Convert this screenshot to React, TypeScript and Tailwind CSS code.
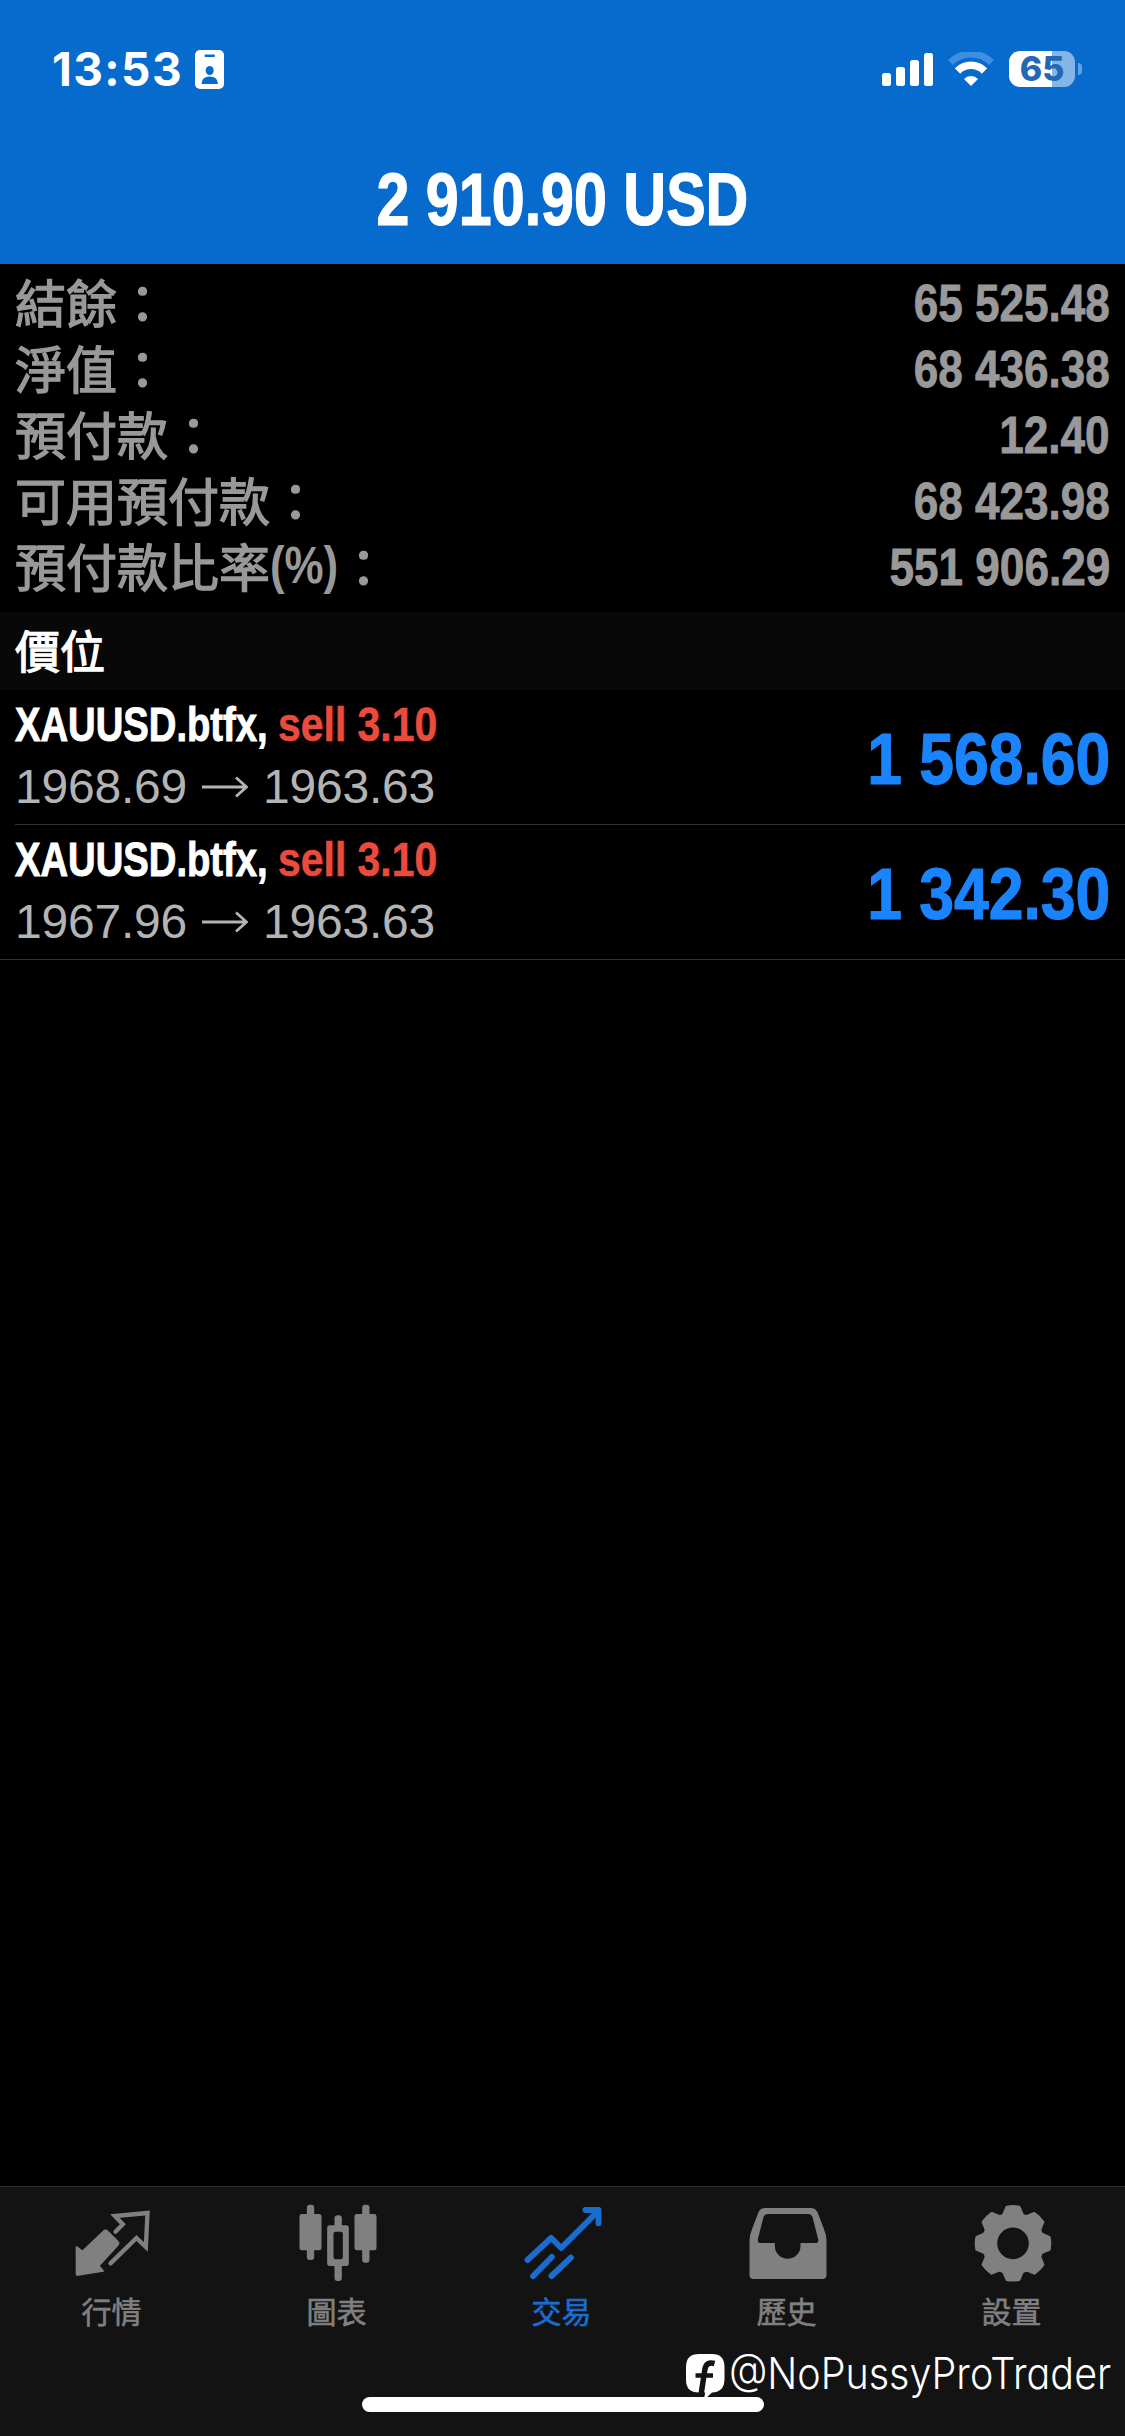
import React from "react";

const CJK = "font-['Noto_Sans_CJK_TC',sans-serif]";
const LATIN = "font-['Liberation_Sans',sans-serif]";

const summary = [
  { label: "結餘", suffix: "", value: "65 525.48" },
  { label: "淨值", suffix: "", value: "68 436.38" },
  { label: "預付款", suffix: "", value: "12.40" },
  { label: "可用預付款", suffix: "", value: "68 423.98" },
  { label: "預付款比率", suffix: "(%)", value: "551 906.29" },
];

const positions = [
  { symbol: "XAUUSD.btfx,", side: "sell 3.10", open: "1968.69", current: "1963.63", profit: "1 568.60" },
  { symbol: "XAUUSD.btfx,", side: "sell 3.10", open: "1967.96", current: "1963.63", profit: "1 342.30" },
];

function gearPath(cx: number, cy: number) {
  const pts: string[] = [];
  const at = (r: number, deg: number) => {
    const a = ((deg - 90) * Math.PI) / 180;
    return `${(cx + r * Math.cos(a)).toFixed(1)} ${(cy + r * Math.sin(a)).toFixed(1)}`;
  };
  for (let i = 0; i < 8; i++) {
    const c = i * 45;
    pts.push(`${i === 0 ? "M" : "L"}${at(91, c - 17.5)}`);
    pts.push(`L${at(110, c - 9.5)}`);
    pts.push(`Q${at(112, c)} ${at(110, c + 9.5)}`);
    pts.push(`L${at(91, c + 17.5)}`);
    pts.push(`Q${at(87, c + 22.5)} ${at(91, c + 27.5)}`);
  }
  return pts.join("") + "Z";
}

function QuotesIcon() {
  return (
    <svg viewBox="217.5 99 240 240" className="h-20 w-20" fill="none" stroke="currentColor">
      <path
        d="M228 231L246 244L309 184Q315 178 321 184L352 215Q357 220 351 226L295 287L308 303L233 315Q228 316 228 311Z"
        fill="currentColor"
        strokeWidth="5"
        strokeLinejoin="round"
      />
      <path d="M345 185L367 163L343 138L441 129L436 231L408 204L330 280" strokeWidth="13" strokeLinecap="round" />
    </svg>
  );
}

function ChartsIcon() {
  return (
    <svg viewBox="892.5 99 240 240" className="h-20 w-20" fill="currentColor">
      <rect x="919" y="104" width="22" height="166" rx="9" />
      <rect x="897" y="132" width="66" height="109" rx="7" />
      <rect x="1085" y="104" width="22" height="174" rx="9" />
      <rect x="1062" y="132" width="66" height="109" rx="7" />
      <rect x="1002" y="136" width="22" height="40" rx="9" />
      <rect x="1002" y="278" width="22" height="55" rx="9" />
      <path
        fillRule="evenodd"
        d="M988 166H1037Q1045 166 1045 174V280Q1045 288 1037 288H988Q980 288 980 280V174Q980 166 988 166ZM1005 185Q999 185 999 191V262Q999 268 1005 268H1021Q1027 268 1027 262V191Q1027 185 1021 185Z"
      />
    </svg>
  );
}

function TradeIcon() {
  return (
    <svg
      viewBox="367.5 99 240 240"
      className="h-20 w-20"
      fill="none"
      stroke="currentColor"
      strokeWidth="18"
      strokeLinecap="round"
      strokeLinejoin="round"
    >
      <path d="M381 270L452 204L482 234L590 126" />
      <path d="M555 120H594V160" />
      <path d="M576 122L592 138" strokeWidth="14" />
      <path d="M398 318L454 261M453 318L511 263" />
    </svg>
  );
}

function HistoryIcon() {
  return (
    <svg viewBox="202.5 99 240 240" className="h-20 w-20" fill="currentColor">
      <path
        fillRule="evenodd"
        d="M254 114H391Q405 114 411 127L429 173Q438 194 438 212V314Q438 327 425 327H220Q207 327 207 314V212Q207 194 216 173L234 127Q240 114 254 114ZM262 132Q253 132 249 141L233 204Q229 219 241 219H283V228A38.500 38.500 0 0 0 360 228V219H404Q417 219 412 204L396 141Q392 132 383 132Z"
      />
    </svg>
  );
}

function SettingsIcon() {
  return (
    <svg viewBox="877.5 99 240 240" className="h-20 w-20" fill="currentColor" stroke="currentColor">
      <path
        fillRule="evenodd"
        strokeWidth="9"
        strokeLinejoin="round"
        d={gearPath(997.5, 220) + "M997.5 168A52 52 0 1 0 997.5 272A52 52 0 1 0 997.5 168Z"}
      />
    </svg>
  );
}

const tabs = [
  { label: "行情", icon: QuotesIcon, active: false },
  { label: "圖表", icon: ChartsIcon, active: false },
  { label: "交易", icon: TradeIcon, active: true },
  { label: "歷史", icon: HistoryIcon, active: false },
  { label: "設置", icon: SettingsIcon, active: false },
];

function StatusBar() {
  return (
    <div className="flex h-[138px] items-center justify-between pl-[52px] pr-[43px]">
      <div className="flex items-center gap-[11px]">
        <span className="w-[132px] whitespace-nowrap font-['Inter',sans-serif] text-[46px] font-bold leading-[54px] tracking-[1.4px] text-white">
          13:53
        </span>
        <svg viewBox="0 0 29 39" className="h-[39px] w-[29px]">
          <rect width="29" height="39" rx="5" fill="#fff" />
          <rect x="9.500" y="4.500" width="10.500" height="2.600" rx="1.300" fill="#076bce" />
          <ellipse cx="14.700" cy="20.500" rx="4" ry="4.500" fill="#076bce" />
          <path d="M6.500 33.500Q7 26.500 14.700 26.500T23 33.500Q23 34 22 34H7.500Q6.500 34 6.500 33.500Z" fill="#076bce" />
        </svg>
      </div>
      <div className="flex items-center">
        <svg viewBox="0 0 51 33" className="h-[33px] w-[51px]" fill="#fff">
          <rect x="0" y="20" width="9" height="13" rx="2.500" />
          <rect x="14" y="14" width="9" height="19" rx="2.500" />
          <rect x="28" y="7" width="9" height="26" rx="2.500" />
          <rect x="42" y="0" width="9" height="33" rx="2.500" />
        </svg>
        <svg viewBox="0 0 46 34" className="ml-[15px] h-[34px] w-[46px]" fill="none">
          <path d="M2.500 10.500A29 29 0 0 1 43.500 10.500" stroke="#3e8fdf" strokeWidth="7" />
          <path d="M9.500 19A19 19 0 0 1 36.500 19" stroke="#fff" strokeWidth="7.500" />
          <path d="M23 34L16 27A9.700 9.700 0 0 1 30 27Z" fill="#fff" />
        </svg>
        <div className="ml-[15px] flex h-9 w-[66px] items-center justify-center rounded-[11px] bg-linear-to-r from-white from-65% to-[#84b5e7] to-65%">
          <span className="font-['Inter',sans-serif] text-[34px] font-extrabold leading-9 text-[#2468b4]">65</span>
        </div>
        <div className="ml-[3px] h-3 w-1 rounded-r-full bg-[#63a2e0]" />
      </div>
    </div>
  );
}

function Watermark() {
  return (
    <div className="absolute left-[686px] top-[2346px] flex h-[54px] items-start">
      <svg viewBox="0 0 39 46" className="mt-2 h-[46px] w-[39px]">
        <path d="M13 0H26Q38.500 0 38.500 13V25Q38.500 38 26 38.500L19 45L20 38.500H13Q0 38.500 0 26V13Q0 0 13 0Z" fill="#fff" />
        <path d="M28.500 9.500Q20 7 18.800 16L15 41" fill="none" stroke="#131313" strokeWidth="5.500" />
        <path d="M9.500 21.500H27" stroke="#131313" strokeWidth="4.500" />
        <path d="M18 45L19.500 37L24 38.500Z" fill="#fff" />
      </svg>
      <span className="ml-1 w-[385px] whitespace-nowrap">
        <span className="inline-block origin-left scale-x-[0.918] font-['Inter',sans-serif] text-[43px] font-[350] leading-[54px] text-white [font-feature-settings:'cv11']">
          @NoPussyProTrader
        </span>
      </span>
    </div>
  );
}

export default function App() {
  return (
    <div className={`relative flex h-[2436px] w-[1125px] flex-col overflow-hidden bg-black ${LATIN}`}>
      <header className="flex h-[264px] shrink-0 flex-col bg-[#076bce]">
        <StatusBar />
        <h1 className="flex h-[124px] items-center justify-center text-[74px] font-bold leading-[84px] text-white">
          <span className="scale-x-[0.8] whitespace-nowrap [-webkit-text-stroke:1.2px_#fff]">2 910.90 USD</span>
        </h1>
      </header>

      <section className="flex h-[348px] shrink-0 flex-col pl-[15px] pr-[15px] pt-1.5 text-[#999]">
        {summary.map((row) => (
          <div key={row.label} className="flex h-[66px] items-center justify-between">
            <div className={`flex items-center pb-1 text-[51px] leading-[62px] ${CJK}`}>
              <span className="[-webkit-text-stroke:1.4px_#999]">{row.label}</span>
              {row.suffix && (
                <span className={`w-[68px] pt-0.5 ${LATIN}`}>
                  <span className="inline-block origin-left scale-x-[0.86] font-bold">{row.suffix}</span>
                </span>
              )}
              <span className="[-webkit-text-stroke:1.4px_#999]">：</span>
            </div>
            <span className="origin-right scale-x-[0.865] whitespace-nowrap pt-0.5 text-[51px] font-bold leading-[64px] [-webkit-text-stroke:0.8px_#999]">
              {row.value}
            </span>
          </div>
        ))}
      </section>

      <div className={`flex h-[78px] shrink-0 items-center bg-[#080808] pb-0.5 pl-[15px] text-[45px] leading-[76px] text-white [-webkit-text-stroke:1.3px_#fff] ${CJK}`}>
        價位
      </div>

      <section className="border-b border-[#333]">
        {positions.map((p, i) => (
          <div key={p.open} className={i === 0 ? "flex h-[134px]" : "ml-[15px] flex h-[135px] border-t border-[#333]"}>
            <div className={i === 0 ? "flex w-full pl-[15px]" : "flex w-full"}>
              <div className="flex flex-1 flex-col pt-[3px]">
                <div className="flex h-[62px] items-center whitespace-nowrap text-[49px] font-bold leading-[62px]">
                  <span className="w-[263px] text-white">
                    <span className="inline-block origin-left scale-x-[0.78] [-webkit-text-stroke:1px_#fff]">{p.symbol}</span>
                  </span>
                  <span className="origin-left scale-x-[0.835] text-[#eb4b3d] [-webkit-text-stroke:0.6px_#eb4b3d]">{p.side}</span>
                </div>
                <div className="flex h-[64px] items-center text-[48px] leading-[64px] tracking-[-0.2px] text-[#b4b4b4]">
                  <span className="w-[187px]">{p.open}</span>
                  <svg viewBox="0 0 46 22" className="h-[22px] w-[46px]" fill="none" stroke="currentColor" strokeWidth="2.800">
                    <path d="M0 11H44M34 1.500L44.500 11L34 20.500" />
                  </svg>
                  <span className="ml-[15px]">{p.current}</span>
                </div>
              </div>
              <div className="flex items-center pr-[15px] pt-[3px]">
                <span className="origin-right scale-x-[0.855] whitespace-nowrap text-[73px] font-bold leading-[84px] text-[#1a84ff] [-webkit-text-stroke:1.2px_#1a84ff]">
                  {p.profit}
                </span>
              </div>
            </div>
          </div>
        ))}
      </section>

      <nav className="mt-auto flex h-[250px] shrink-0 border-t border-[#2c2c2c] bg-[#131313] pt-4">
        {tabs.map(({ label, icon: Icon, active }) => (
          <div key={label} className={active ? "flex w-[225px] flex-col items-center text-[#1a6dd0]" : "flex w-[225px] flex-col items-center text-[#808080]"}>
            <Icon />
            <span className={`mr-[2px] mt-[9px] text-[30px] leading-9 [-webkit-text-stroke:0.6px_currentColor] ${CJK}`}>{label}</span>
          </div>
        ))}
      </nav>

      <div className="absolute left-[362px] top-[2397px] h-[15px] w-[402px] rounded-full bg-white" />
      <Watermark />
    </div>
  );
}
